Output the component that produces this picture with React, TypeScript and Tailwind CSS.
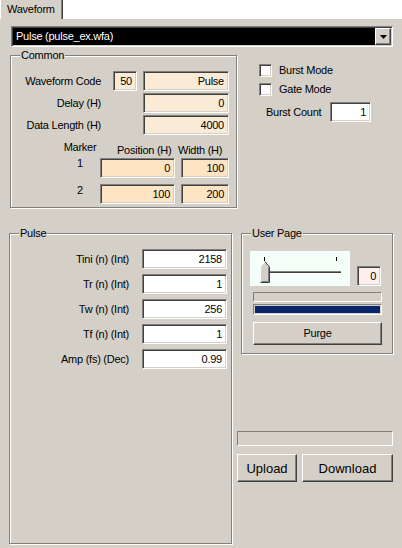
import React from "react"

const font = "font-['Liberation_Sans',Arial,sans-serif] text-[11px] leading-[13px] tracking-[-0.25px] text-black"
const sunken =
  "border border-t-[#808080] border-l-[#808080] border-r-white border-b-white shadow-[inset_1px_1px_0_#404040,inset_-1px_-1px_0_#d4d0c8]"
const raised =
  "border border-t-white border-l-white border-r-[#404040] border-b-[#404040] shadow-[inset_-1px_-1px_0_#808080] bg-[#d4d0c8]"
const thin = "border border-t-[#808080] border-l-[#808080] border-r-white border-b-white"

function Edit({ value, className }: { value: string; className: string }) {
  return (
    <div className={`${sunken} ${className} h-[20px] flex items-center justify-end pr-[4px]`}>
      {value}
    </div>
  )
}

function Group({ title, className, children }: { title: string; className: string; children?: React.ReactNode }) {
  return (
    <div className={`relative border border-[#808080] shadow-[inset_1px_1px_0_#fff,1px_1px_0_#fff] shrink-0 ${className}`}>
      <span className="absolute -top-[7px] left-[9px] bg-[#d4d0c8] px-[1px]">{title}</span>
      {children}
    </div>
  )
}

function Check({ label }: { label: string }) {
  return (
    <div className="flex items-center">
      <span className={`${sunken} w-[13px] h-[13px] bg-white`} />
      <span className="ml-[7px]">{label}</span>
    </div>
  )
}

function Slider() {
  return (
    <svg width="100" height="35" viewBox="0 0 100 35" className="block">
      <rect width="100" height="35" fill="#f5fffa" />
      <line x1="14.5" y1="6" x2="14.5" y2="10" stroke="#000" />
      <line x1="86.5" y1="6" x2="86.5" y2="10" stroke="#000" />
      <line x1="20" y1="20.5" x2="92" y2="20.5" stroke="#808080" />
      <line x1="20" y1="21.5" x2="91" y2="21.5" stroke="#404040" />
      <line x1="20" y1="22.5" x2="92" y2="22.5" stroke="#fff" />
      <line x1="91.5" y1="20" x2="91.5" y2="23" stroke="#fff" />
      <polygon points="10,16 15,10 20,16 20,32 10,32" fill="#d4d0c8" />
      <polyline points="10.5,31.5 10.5,16 15,10.7" fill="none" stroke="#fff" />
      <polyline points="15,10.7 19.5,16 19.5,31.5 10.5,31.5" fill="none" stroke="#404040" />
      <polyline points="18.5,16.5 18.5,30.5 11.5,30.5" fill="none" stroke="#808080" />
    </svg>
  )
}

export default function App() {
  return (
    <div className={`${font} w-[402px] h-[548px] bg-[#d4d0c8] overflow-hidden flex flex-col`}>
      {/* tab strip */}
      <div className="h-[19px] bg-white flex shrink-0">
        <div className="w-[63px] h-[19px] bg-[#d4d0c8] border-l border-white border-r border-r-[#404040] shadow-[inset_-1px_0_0_#808080] flex items-center pl-[6px]">
          Waveform
        </div>
      </div>

      {/* combobox */}
      <div className={`${sunken} ml-[11px] mt-[7px] w-[382px] h-[21px] bg-black flex items-center shrink-0`}>
        <span className="text-white pl-[4px] flex-1">Pulse (pulse_ex.wfa)</span>
        <div className={`${raised} w-[16px] h-[17px] flex items-center justify-center mr-[1px]`}>
          <svg width="7" height="4" viewBox="0 0 7 4">
            <polygon points="0,0 7,0 3.5,4" fill="#000" />
          </svg>
        </div>
      </div>

      {/* top row */}
      <div className="flex mt-[8px] shrink-0">
        <Group title="Common" className="ml-[10px] w-[227px] h-[153px]">
          <div className="flex flex-col pt-[15px]">
            <div className="flex items-center h-[20px]">
              <span className="w-[90px] text-right">Waveform Code</span>
              <Edit value="50" className="ml-[12px] w-[24px] bg-[#faebd7]" />
              <Edit value="Pulse" className="ml-[6px] w-[86px] bg-[#faebd7]" />
            </div>
            <div className="flex items-center h-[20px] mt-[2px]">
              <span className="w-[90px] text-right">Delay (H)</span>
              <Edit value="0" className="ml-[42px] w-[86px] bg-[#faebd7]" />
            </div>
            <div className="flex items-center h-[20px] mt-[2px]">
              <span className="w-[90px] text-right">Data Length (H)</span>
              <Edit value="4000" className="ml-[42px] w-[86px] bg-[#faebd7]" />
            </div>
            <div className="flex">
              <div className="ml-[52px] w-[34px] flex flex-col items-center pt-[6px]">
                <span>Marker</span>
                <span className="mt-[3px]">1</span>
                <span className="mt-[14px]">2</span>
              </div>
              <div className="ml-[3px] w-[75px] flex flex-col pt-[9px]">
                <span className="pl-[17px]">Position (H)</span>
                <Edit value="0" className="mt-[1px] w-[75px] bg-[#ffe4c4]" />
                <Edit value="100" className="mt-[6px] w-[75px] bg-[#ffe4c4]" />
              </div>
              <div className="ml-[6px] w-[48px] flex flex-col pt-[9px]">
                <span className="-ml-[3px] whitespace-nowrap">Width (H)</span>
                <Edit value="100" className="mt-[1px] w-[48px] bg-[#ffe4c4]" />
                <Edit value="200" className="mt-[6px] w-[48px] bg-[#ffe4c4]" />
              </div>
            </div>
          </div>
        </Group>

        <div className="flex flex-col pt-[9px]">
          <div className="ml-[22px]">
            <Check label="Burst Mode" />
          </div>
          <div className="ml-[22px] mt-[6px]">
            <Check label="Gate Mode" />
          </div>
          <div className="ml-[29px] mt-[6px] flex items-center">
            <span className="w-[64px]">Burst Count</span>
            <Edit value="1" className="w-[41px] bg-white" />
          </div>
        </div>
      </div>

      {/* bottom row */}
      <div className="flex mt-[25px]">
        <Group title="Pulse" className="ml-[9px] w-[223px] h-[311px]">
          <div className="grid grid-cols-[119px_85px] gap-x-[13px] gap-y-[5px] pt-[15px] items-center">
            <span className="text-right">Tini (n) (Int)</span>
            <Edit value="2158" className="w-[85px] bg-white" />
            <span className="text-right">Tr (n) (Int)</span>
            <Edit value="1" className="w-[85px] bg-white" />
            <span className="text-right">Tw (n) (Int)</span>
            <Edit value="256" className="w-[85px] bg-white" />
            <span className="text-right">Tf (n) (Int)</span>
            <Edit value="1" className="w-[85px] bg-white" />
            <span className="text-right">Amp (fs) (Dec)</span>
            <Edit value="0.99" className="w-[85px] bg-white" />
          </div>
        </Group>

        <div className="ml-[5px] w-[156px] flex flex-col">
          <Group title="User Page" className="ml-[4px] w-[152px] h-[121px]">
            <div className="flex flex-col pl-[8px] pt-[17px]">
              <div className="flex items-end">
                <Slider />
                <Edit value="0" className="ml-[7px] w-[24px] bg-[#fff0ee]" />
              </div>
              <div className={`${thin} ml-[3px] mt-[6px] w-[129px] h-[10px]`} />
              <div className={`${thin} ml-[3px] mt-[2px] w-[129px] h-[11px] p-[1px]`}>
                <div className="w-full h-full bg-[#0a246a]" />
              </div>
              <button className={`${raised} ml-[3px] mt-[7px] w-[129px] h-[23px] flex items-center justify-center`}>
                Purge
              </button>
            </div>
          </Group>

          <div className={`${thin} mt-[77px] w-[156px] h-[15px]`} />
          <div className="flex mt-[8px]">
            <button className={`${raised} w-[60px] h-[28px] flex items-center justify-center text-[13px] tracking-normal`}>
              Upload
            </button>
            <button className={`${raised} ml-[5px] w-[91px] h-[28px] flex items-center justify-center text-[13px] tracking-normal`}>
              Download
            </button>
          </div>
        </div>
      </div>
    </div>
  )
}
